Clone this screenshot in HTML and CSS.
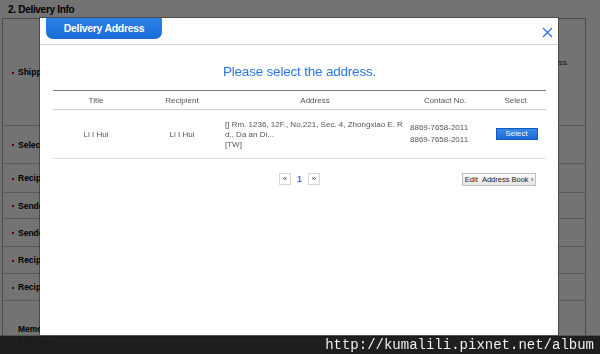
FILE: index.html
```html
<!DOCTYPE html>
<html lang="en">
<head>
    <meta charset="UTF-8">
    <title>Delivery Address</title>
    <link rel="stylesheet" href="styles.css">
</head>
<body>
    <div class="page">
        <div class="section-title">2. Delivery Info</div>
        <div class="form">
            <div class="row r1"><span class="label"><i></i>Shipping Address</span><span class="note">Please enter the address.</span></div>
            <div class="row r2"><span class="label"><i></i>Select Store</span></div>
            <div class="row r3"><span class="label"><i></i>Recipient Name</span></div>
            <div class="row r4"><span class="label"><i></i>Sender Name</span></div>
            <div class="row r5"><span class="label"><i></i>Sender Phone</span></div>
            <div class="row r6"><span class="label"><i></i>Recipient Phone</span></div>
            <div class="row r7"><span class="label"><i></i>Recipient Address</span></div>
            <div class="row memo">
                <span class="label">Memo</span>
                <span class="memo-box">Request</span>
            </div>
        </div>
    </div>

    <div class="shade"></div>

    <div class="modal">
        <div class="modal-head">
            <div class="tab">Delivery Address</div>
            <svg class="close" width="11" height="11" viewBox="0 0 11 11">
                <path d="M1 1L10 10M10 1L1 10" stroke="#2f74e0" stroke-width="1.3" fill="none"/>
            </svg>
        </div>
        <div class="modal-body">
            <h2 class="headline">Please select the address.</h2>
            <div class="table">
                <div class="thead">
                    <span>Title</span>
                    <span>Recipient</span>
                    <span>Address</span>
                    <span>Contact No.</span>
                    <span>Select</span>
                </div>
                <div class="trow">
                    <span class="c">Li I Hui</span>
                    <span class="c">Li I Hui</span>
                    <span class="addr">[] Rm. 1236, 12F., No.221, Sec. 4, Zhongxiao E. R<br>d., Da an Di...<br>[TW]</span>
                    <span class="phone">8869-7658-2011<br>8869-7658-2011</span>
                    <span class="c"><button class="btn-select">Select</button></span>
                </div>
            </div>
            <div class="foot">
                <div class="pager">
                    <span class="pg">&laquo;</span>
                    <span class="cur">1</span>
                    <span class="pg">&raquo;</span>
                </div>
                <button class="btn-edit">Edit &nbsp;Address Book &rsaquo;</button>
            </div>
        </div>
    </div>

    <div class="watermark">http://kumalili.pixnet.net/album</div>
</body>
</html>
```

FILE: styles.css
```css
body{
    margin: 0;
    width: 600px;
    height: 354px;
    overflow: hidden;
    background: #fff;
    font-family: "Liberation Sans", Arial, sans-serif;
}
.page{
    padding: 0 14px 0 2px;
}
.section-title{
    height: 18px;
    line-height: 19px;
    padding-left: 6px;
    font-size: 10px;
    font-weight: bold;
    letter-spacing: -0.3px;
    color: #000;
}
.form{
    border: 1px solid #a8a8a8;
    border-bottom: none;
}
.row{
    display: flex;
    align-items: center;
    justify-content: space-between;
    border-bottom: 1px solid #c8c8c8;
    box-sizing: border-box;
}
.r1{ height: 107px; }
.r2{ height: 38px; }
.r3{ height: 29px; }
.r4{ height: 26px; }
.r5{ height: 28px; }
.r6{ height: 27px; }
.r7{ height: 27px; }
.label{
    font-size: 8.5px;
    font-weight: bold;
    color: #000;
    padding-left: 9px;
    white-space: nowrap;
}
.label i{
    display: inline-block;
    width: 2px;
    height: 2px;
    background: #c00000;
    margin-right: 4px;
    vertical-align: middle;
}
.note{
    font-size: 8px;
    color: #333;
    padding-right: 16px;
    margin-top: -20px;
}
.memo{
    height: 60px;
    flex-direction: column;
    align-items: flex-start;
    justify-content: flex-start;
    border-bottom: none;
    padding-top: 23px;
}
.memo .label{
    padding-left: 15px;
}
.memo-box{
    margin: 2px 0 0 16px;
    border: 1px solid #bbb;
    font-size: 8px;
    color: #666;
    padding: 1px 3px;
    width: 520px;
}

.shade{
    position: fixed;
    left: 0;
    top: 0;
    width: 600px;
    height: 354px;
    background: rgba(0, 0, 0, 0.55);
}

.modal{
    position: absolute;
    left: 40px;
    top: 18px;
    width: 518px;
    height: 318px;
    background: #fff;
    box-shadow: 0 0 0 1px rgba(0, 0, 0, 0.35);
}
.modal-head{
    height: 26px;
    border-bottom: 1px solid #d4d4d4;
    position: relative;
}
.tab{
    margin-left: 6px;
    width: 116px;
    height: 21px;
    line-height: 21px;
    text-align: center;
    color: #fff;
    font-size: 10.5px;
    font-weight: bold;
    letter-spacing: -0.3px;
    background: linear-gradient(#2d82e6, #1a6bd6);
    border-radius: 0 0 7px 7px;
}
.close{
    position: absolute;
    right: 5px;
    top: 9px;
}
.modal-body{
    padding: 0 12px 0 13px;
}
.headline{
    margin: 17px 0 0;
    height: 20px;
    line-height: 20px;
    text-align: center;
    font-size: 13.5px;
    font-weight: normal;
    letter-spacing: -0.2px;
    color: #2a78e0;
}
.table{
    margin-top: 8px;
    border-top: 1px solid #7a7a7a;
    font-size: 8px;
    color: #555;
}
.thead, .trow{
    display: grid;
    grid-template-columns: 86px 86px 180px 80px 61px;
}
.thead{
    height: 18px;
    line-height: 20px;
    border-bottom: 1px solid #cfcfcf;
    text-align: center;
}
.trow{
    height: 48px;
    border-bottom: 1px solid #e0e0e0;
    align-items: center;
}
.trow .c{
    text-align: center;
}
.addr{
    line-height: 10px;
    white-space: nowrap;
    margin-top: 2px;
}
.phone{
    line-height: 12px;
    padding-left: 5px;
    white-space: nowrap;
}
.btn-select{
    width: 42px;
    height: 12px;
    border: 1px solid #1259bd;
    background: linear-gradient(#3a8ae8, #1b6cd8);
    color: #fff;
    font-family: "Liberation Sans", Arial, sans-serif;
    font-size: 8px;
    padding: 0;
    line-height: 10px;
    margin-left: 2px;
}
.foot{
    position: relative;
    margin-top: 14px;
    height: 14px;
}
.pager{
    display: flex;
    justify-content: center;
    align-items: center;
    gap: 5px;
}
.pg{
    width: 10px;
    height: 10px;
    border: 1px solid #d6d6d6;
    font-size: 8px;
    line-height: 9px;
    text-align: center;
    color: #444;
}
.cur{
    font-size: 9px;
    font-weight: bold;
    color: #2a78e0;
    padding: 0 1px;
}
.btn-edit{
    position: absolute;
    right: 10px;
    top: 0;
    width: 74px;
    height: 13px;
    padding: 0;
    border: 1px solid #c0c0c0;
    background: linear-gradient(#fafafa, #e6e6e6);
    font-family: "Liberation Sans", Arial, sans-serif;
    font-size: 7.5px;
    line-height: 11px;
    color: #222;
    white-space: nowrap;
}

.watermark{
    position: fixed;
    left: 0;
    top: 335px;
    width: 600px;
    height: 19px;
    box-sizing: border-box;
    border-top: 1px solid #555;
    background: rgba(22, 22, 22, 0.9);
    color: #eee;
    font-family: "Liberation Mono", "DejaVu Sans Mono", monospace;
    font-size: 14px;
    line-height: 18px;
    text-align: right;
    padding-right: 6px;
}
```
